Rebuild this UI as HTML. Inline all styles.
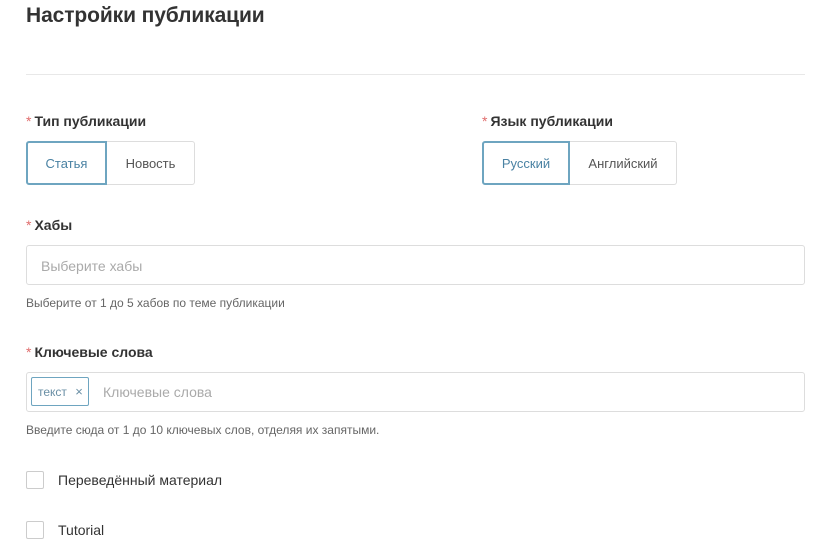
<!DOCTYPE html>
<html><head><meta charset="utf-8"><style>
*{box-sizing:border-box;margin:0;padding:0}
body{width:817px;height:555px;background:#fff;font-family:"Liberation Sans",sans-serif;color:#333;position:relative;overflow:hidden}
.a{position:absolute}
h1{position:absolute;left:26px;top:4px;font-size:21px;font-weight:bold;color:#333;letter-spacing:-0.1px}
.hr{left:26px;top:74px;width:779px;height:1px;background:#e8e8e8}
.lbl{font-size:14px;font-weight:bold;color:#333}
.lbl span{color:#e06c6c;font-weight:normal;margin-right:3px}
.seg{display:flex;height:44px}
.seg div{border:1px solid #ddd;font-size:13px;color:#555;display:flex;align-items:center;justify-content:center}
.seg .on{border:2px solid #6ea5c0;color:#4a82a3;border-radius:3px 0 0 3px}
.seg .off{border-left:none;border-radius:0 3px 3px 0}
.inp{left:26px;width:779px;height:40px;border:1px solid #ddd;border-radius:3px;font-size:14px;color:#aaa}
.hint{font-size:12px;color:#666}
.cb{width:18px;height:18px;border:1px solid #ccc;border-radius:2px;left:26px}
.cbl{left:58px;font-size:14px;color:#333}
</style></head><body>
<h1>Настройки публикации</h1>
<div class="a hr"></div>

<div class="a lbl" style="left:26px;top:113px"><span>*</span>Тип публикации</div>
<div class="a seg" style="left:26px;top:141px"><div class="on" style="width:81px">Статья</div><div class="off" style="width:88px">Новость</div></div>

<div class="a lbl" style="left:482px;top:113px"><span>*</span>Язык публикации</div>
<div class="a seg" style="left:482px;top:141px"><div class="on" style="width:88px">Русский</div><div class="off" style="width:107px">Английский</div></div>

<div class="a lbl" style="left:26px;top:217px"><span>*</span>Хабы</div>
<div class="a inp" style="top:245px;padding:12px 14px">Выберите хабы</div>
<div class="a hint" style="left:26px;top:296px">Выберите от 1 до 5 хабов по теме публикации</div>

<div class="a lbl" style="left:26px;top:344px"><span>*</span>Ключевые слова</div>
<div class="a inp" style="top:372px"></div>
<div class="a" style="left:31px;top:377px;width:58px;height:29px;border:1px solid #6ea5c0;border-radius:2px;font-size:12px;color:#6a8fa5;padding:6px 0 0 6px">текст <span style="margin-left:5px;font-size:13px">×</span></div>
<div class="a" style="left:103px;top:384px;font-size:14px;color:#aaa">Ключевые слова</div>
<div class="a hint" style="left:26px;top:423px">Введите сюда от 1 до 10 ключевых слов, отделяя их запятыми.</div>

<div class="a cb" style="top:471px"></div>
<div class="a cbl" style="top:472px">Переведённый материал</div>
<div class="a cb" style="top:521px"></div>
<div class="a cbl" style="top:522px">Tutorial</div>
</body></html>
